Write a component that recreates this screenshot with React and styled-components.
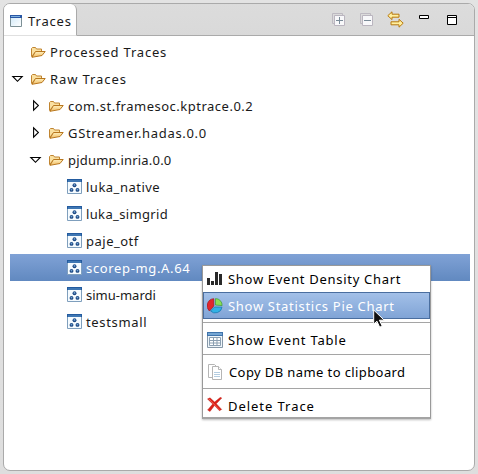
import React from 'react';
import styled, { createGlobalStyle, css } from 'styled-components';

const GlobalStyle = createGlobalStyle`
  * { box-sizing: border-box; }
  body { margin: 0; background: #e1e1e1; font: 13px/27px "Noto Sans", "Open Sans", sans-serif; color: #1a1a1a; }
  svg { display: block; flex: none; }
`;
const Window = styled.main`
  position: relative;
  height: 474px;
  padding: 3px;
  overflow: hidden;
  background: linear-gradient(#e3e3e3, #dedede);
`;
const Panel = styled.section`
  height: 468px;
  border: 1px solid #aaa;
  border-radius: 7px;
  background: #fff;
  overflow: hidden;
`;
const Header = styled.header`
  display: flex;
  justify-content: space-between;
  height: 32px;
  background: linear-gradient(#dcdcdc, #d9d9d9);
`;
const Tab = styled.div`
  display: flex;
  align-items: center;
  gap: 6px;
  width: 73px;
  padding: 2px 0 0 6px;
  background: #fff;
  border-right: 1px solid #aaa;
  border-radius: 0 6px 0 0;
  border-bottom: 1px solid #e0e0e0;
`;
const Toolbar = styled.div`
  display: flex;
  flex: 1;
  justify-content: flex-end;
  align-items: center;
  gap: 12px;
  padding-right: 14px;
  border-bottom: 1px solid #aaa;
`;
const Tree = styled.ul`
  list-style: none;
  margin: 2px 4px 0 6px;
  padding: 0;
`;
const Row = styled.li`
  display: flex;
  align-items: center;
  height: 27px;
  padding-left: ${p => p.$level * 18 + (p.$level === 2 ? 1 : 0)}px;
  ${p => p.$selected && css`background: linear-gradient(#80a2d6, #6189c0); color: #fff;`}
`;
const Expander = styled.span`
  width: 20px;
  flex: none;
`;
const Label = styled.span`
  white-space: nowrap;
  letter-spacing: ${p => p.$track || 0}px;
  margin-left: ${p => p.$gap || 0}px;
  padding-top: ${p => p.$drop || 0}px;
`;
const Menu = styled.div`
  position: absolute;
  left: 202px;
  top: 265px;
  width: 229px;
  height: 154px;
  background: #fff;
  border: 1px solid #999;
  border-bottom-width: 2px;
  border-bottom-color: #a4a4a4;
  box-shadow: 0 1px 2px #0004;
  color: #000;
`;
const Item = styled.div`
  display: flex;
  align-items: center;
  height: ${p => p.$h || 27}px;
  padding: ${p => p.$pad || 0}px 0 0 4px;
  ${p => p.$active && css`
    padding-left: 3px;
    color: #fff;
    border: 1px solid #4a6e9f;
    background: linear-gradient(#a3c0e8, #80a4d6);
  `}
`;
const Separator = styled.div`
  height: 1px;
  margin-top: ${p => p.$top || 0}px;
  background: #a5a5a5;
`;
const Pointer = styled.svg`
  position: absolute;
  left: 373px;
  top: 309px;
`;

const Folder = () => (
  <svg width="16" height="16" viewBox="0 0 16 16">
    <defs><linearGradient id="fold" x2="0" y2="1"><stop stopColor="#fff0bd" /><stop offset="1" stopColor="#f0bb62" /></linearGradient></defs>
    <path d="M1.5 12.5v-8l1-1h3l1 1.5h5v3h-6z" fill="#fae0a0" stroke="#c08430" />
    <path d="M2 13.3 5.5 7.5h9.7L12 11.5z" fill="url(#fold)" stroke="#b8771f" strokeLinejoin="round" />
  </svg>
);
const TraceIcon = () => (
  <svg width="15" height="15" viewBox="0 0 15 15">
    <path d="M.5.5h14v14H.5z" fill="#f5fbff" stroke="#7f9fbd" />
    <path d="M0 0h15v3H0z" fill="#235b9f" /><path d="M1 1.5h13v1H1z" fill="#5c93c8" />
    {[[7.5, 6.2], [4.5, 10.9], [10.5, 10.9]].map(([x, y]) => <g key={x}><circle cx={x} cy={y} r="1.95" fill="#1c4781" /><circle cx={x} cy={y - .3} r=".9" fill="#6ea1d4" /></g>)}
  </svg>
);
const Arrow = ({ open }) => (
  <svg width="20" height="14" viewBox="0 0 20 14">
    {open
      ? <path d="M2.8 4.5h9.4L7.5 9.3z" fill="#fff" stroke="#000" strokeWidth="1.1" />
      : <path d="M5.6 1.8v9.4L10.4 6.5z" fill="#fff" stroke="#000" strokeWidth="1.1" />}
  </svg>
);
const WindowIcon = () => (
  <svg width="12" height="12" viewBox="0 0 12 12">
    <defs><linearGradient id="pane" x2="1" y2="1"><stop stopColor="#cfe8f8" /><stop offset="1" stopColor="#fff" /></linearGradient></defs>
    <path d="M.5.5h11v11H.5z" fill="url(#pane)" stroke="#7d9096" />
    <path d="M0 0h12v3H0z" fill="#2856a4" /><path d="M1 1h9v1H1z" fill="#7eb1df" />
  </svg>
);
const FoldAll = ({ plus }) => (
  <svg width="16" height="16" viewBox="0 0 16 16">
    <path d="M1.5 11.5v-10h10v2M1.5 11.5h2" fill="none" stroke="#bdb9c1" />
    <path d="M3.5 3.5h10v10h-10z" fill="#f8f8fa" stroke="#bab5bf" />
    <path d={plus ? 'M5 8.5h7M8.5 5v7' : 'M5 8.5h7'} stroke="#7a8b98" />
  </svg>
);
const LinkIcon = () => (
  <svg width="17" height="17" viewBox="0 0 17 17" fill="#fff0a0" stroke="#b8780c" strokeLinejoin="round">
    <path d="M.8 4.7 5 .8v2.4h7v3H5v2.4zM16.2 12.2 12 8.3v2.5H4v3h8v2.4z" />
  </svg>
);
const Minimize = () => <svg width="16" height="16"><path d="M3.5 3.5h9v3h-9z" fill="#fff" stroke="#000" /></svg>;
const Maximize = () => <svg width="16" height="16"><path d="M3.5 3.5h9v9h-9zM3 5.5h10" fill="#fff" stroke="#000" /></svg>;

const Bars = () => (
  <svg width="16" height="16"><path d="M0 7h3v7H0zM4 10h3v4H4zM8 1h3v13H8zM12 3h3v11h-3z" fill="#292929" /></svg>
);
const Pie = () => (
  <svg width="16" height="16" viewBox="0 0 16 16" strokeWidth=".7">
    <path d="M6.8 8V.7A7.1 7.1 0 0 0 2.4 13z" fill="#e2252b" stroke="#a01720" />
    <path d="M8.5 7V.6a6.5 6.5 0 0 1 6.6 7z" fill="#8bdc55" stroke="#3c9b34" />
    <path d="m7.5 9 7.5.2A6.8 6.8 0 0 1 3.5 13z" fill="#30b2e5" stroke="#1770a9" />
  </svg>
);
const TableIcon = () => (
  <svg width="16" height="16" viewBox="0 0 16 16">
    <path d="M.5.5h15v15H.5z" fill="#eef5fa" stroke="#8798a8" />
    <path d="M0 0h16v4H0z" fill="#3f73ab" /><path d="M1 1h14v2H1z" fill="#75a6d3" />
    <path d="M2.5 5.5h11v8h-11zM2.5 8.5h11M2.5 11h11M6.5 5.5v8M10 5.5v8" fill="#fff" stroke="#8b9fb1" />
  </svg>
);
const Copy = () => (
  <svg width="16" height="16" viewBox="0 0 16 16" fill="#fff" stroke="#b5b5b5">
    <path d="M1.5.5h6l3 3v10h-9z" /><path d="M5.5 2.5h6l3 3v10h-9z" /><path d="M11.5 2.5v3h3" />
    <path d="M7 8.5h6M7 10.5h6M7 12.5h6" stroke="#b4cde1" />
  </svg>
);
const Delete = () => (
  <svg width="16" height="16" viewBox="0 0 16 16">
    <path d="M.5 2 3 .8 7.6 5 13.4.3l1.4.8-5.5 5.6 5.4 5.7-2.3 1.3-4.9-5.2-4.5 6L.6 13 5.7 7z" fill="#dc2118" stroke="#b31b14" strokeWidth=".4" />
    <path d="M2 2l10.5 11" stroke="#f46d5d" strokeWidth=".8" />
  </svg>
);

const nodes = [
  ['Processed Traces', 0, null, 0.8],
  ['Raw Traces', 0, true, 0.9],
  ['com.st.framesoc.kptrace.0.2', 1, false, 0.5],
  ['GStreamer.hadas.0.0', 1, false, 0.68],
  ['pjdump.inria.0.0', 1, true, 0.2],
  ['luka_native', 2, null, 0.5],
  ['luka_simgrid', 2, null, 0.35],
  ['paje_otf', 2, null, 0.5],
  ['scorep-mg.A.64', 2, null, 0.65],
  ['simu-mardi', 2, null, 0],
  ['testsmall', 2, null, 0.65],
];

export default function App() {
  return (
    <Window>
      <GlobalStyle />
      <Panel>
        <Header>
          <Tab><WindowIcon /><Label $track={0.85} $drop={1}>Traces</Label></Tab>
          <Toolbar><FoldAll plus /><FoldAll /><LinkIcon /><Minimize /><Maximize /></Toolbar>
        </Header>
        <Tree>
          {nodes.map(([name, level, open, track]) => (
            <Row key={name} $level={level} $selected={name.startsWith('scorep')}>
              <Expander>{open !== null && <Arrow open={open} />}</Expander>
              {level === 2 ? <TraceIcon /> : <Folder />}
              <Label $track={track} $gap={4} $drop={2}>{name}</Label>
            </Row>
          ))}
        </Tree>
      </Panel>
      <Menu>
        <Item $h={26}><Bars /><Label $gap={5} $track={0.7}>Show Event Density Chart</Label></Item>
        <Item $active><Pie /><Label $gap={5} $track={0.7} $drop={2}>Show Statistics Pie Chart</Label></Item>
        <Separator $top={3} />
        <Item $h={31} $pad={2}><TableIcon /><Label $gap={5} $track={0.8} $drop={1}>Show Event Table</Label></Item>
        <Separator />
        <Item $h={33}><Copy /><Label $gap={6} $track={0.4} $drop={2}>Copy DB name to clipboard</Label></Item>
        <Separator />
        <Item $h={29} $pad={3}><Delete /><Label $gap={5} $track={0.95} $drop={2}>Delete Trace</Label></Item>
      </Menu>
      <Pointer width="13" height="20" viewBox="0 0 13 20">
        <path d="M.7 1v14.2l3.2-3 2.8 6 2.5-1.2-2.8-5.8h4.8z" fill="#111" stroke="#fff" />
      </Pointer>
    </Window>
  );
}
